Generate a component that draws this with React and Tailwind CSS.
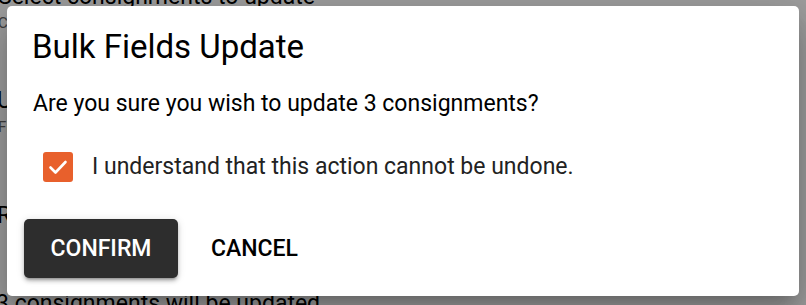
export default function App() {
  return (
    <div className="relative h-[305px] w-[806px] overflow-hidden bg-white" style={{ fontFamily: "Roboto, 'Liberation Sans', sans-serif" }}>
      {/* background page */}
      <div className="flex flex-col text-black">
        <div className="-mt-[17px] -ml-[2px] whitespace-nowrap text-[23px] leading-[28px]">Select consignments to update</div>
        <div className="mt-[2px] -ml-[2px] whitespace-nowrap text-[15px] leading-[20px] text-[#666]">Choose consignments</div>
        <div className="mt-[54px] -ml-[3px] whitespace-nowrap text-[23px] leading-[28px]">Update</div>
        <div className="mt-[2px] -ml-[2px] whitespace-nowrap text-[15px] leading-[20px] text-[#666]">Fields</div>
        <div className="mt-[65px] -ml-[3px] whitespace-nowrap text-[23px] leading-[28px]">Review</div>
        <div className="mt-[60px] -ml-[4px] whitespace-nowrap text-[23px] leading-[28px]">3 consignments will be updated</div>
      </div>

      {/* backdrop + dialog */}
      <div className="absolute inset-0 bg-black/[0.38] pl-[7px] pt-[6px]">
        <div className="flex h-[290px] w-[792px] flex-col rounded-[5px] bg-white shadow-[0_11px_15px_-7px_rgba(0,0,0,0.2),0_24px_38px_3px_rgba(0,0,0,0.14),0_9px_46px_8px_rgba(0,0,0,0.12)]">
          <div className="pl-[25px] pt-[21px] text-[33px] leading-[40px] text-black">Bulk Fields Update</div>
          <div className="mt-[22px] pl-[26px] text-[23px] leading-[30px] text-black">Are you sure you wish to update 3 consignments?</div>
          <div className="mt-[33px] flex items-center pl-[36px]">
            <div className="flex h-[30px] w-[30px] items-center justify-center rounded-[3px] bg-[#e8602c]">
              <svg viewBox="0 0 24 24" className="h-[24px] w-[24px]" fill="none" stroke="white" strokeWidth="2.6" strokeLinecap="round" strokeLinejoin="round">
                <path d="M4.5 12.5l5 5L19.5 7" />
              </svg>
            </div>
            <div className="ml-[19px] text-[23px] leading-[30px] text-[#222]">I understand that this action cannot be undone.</div>
          </div>
          <div className="mt-[37px] flex items-center pl-[17px]">
            <div className="flex h-[59px] w-[154px] items-center justify-center rounded-[5px] bg-[#2d2d2d] pt-[2px] text-[23px] font-medium text-white shadow-[0_3px_3px_-2px_rgba(0,0,0,0.3),0_3px_4px_0_rgba(0,0,0,0.2),0_1px_8px_0_rgba(0,0,0,0.12)]">CONFIRM</div>
            <div className="ml-[33px] pt-[2px] text-[23px] font-medium text-black">CANCEL</div>
          </div>
        </div>
      </div>
    </div>
  );
}
